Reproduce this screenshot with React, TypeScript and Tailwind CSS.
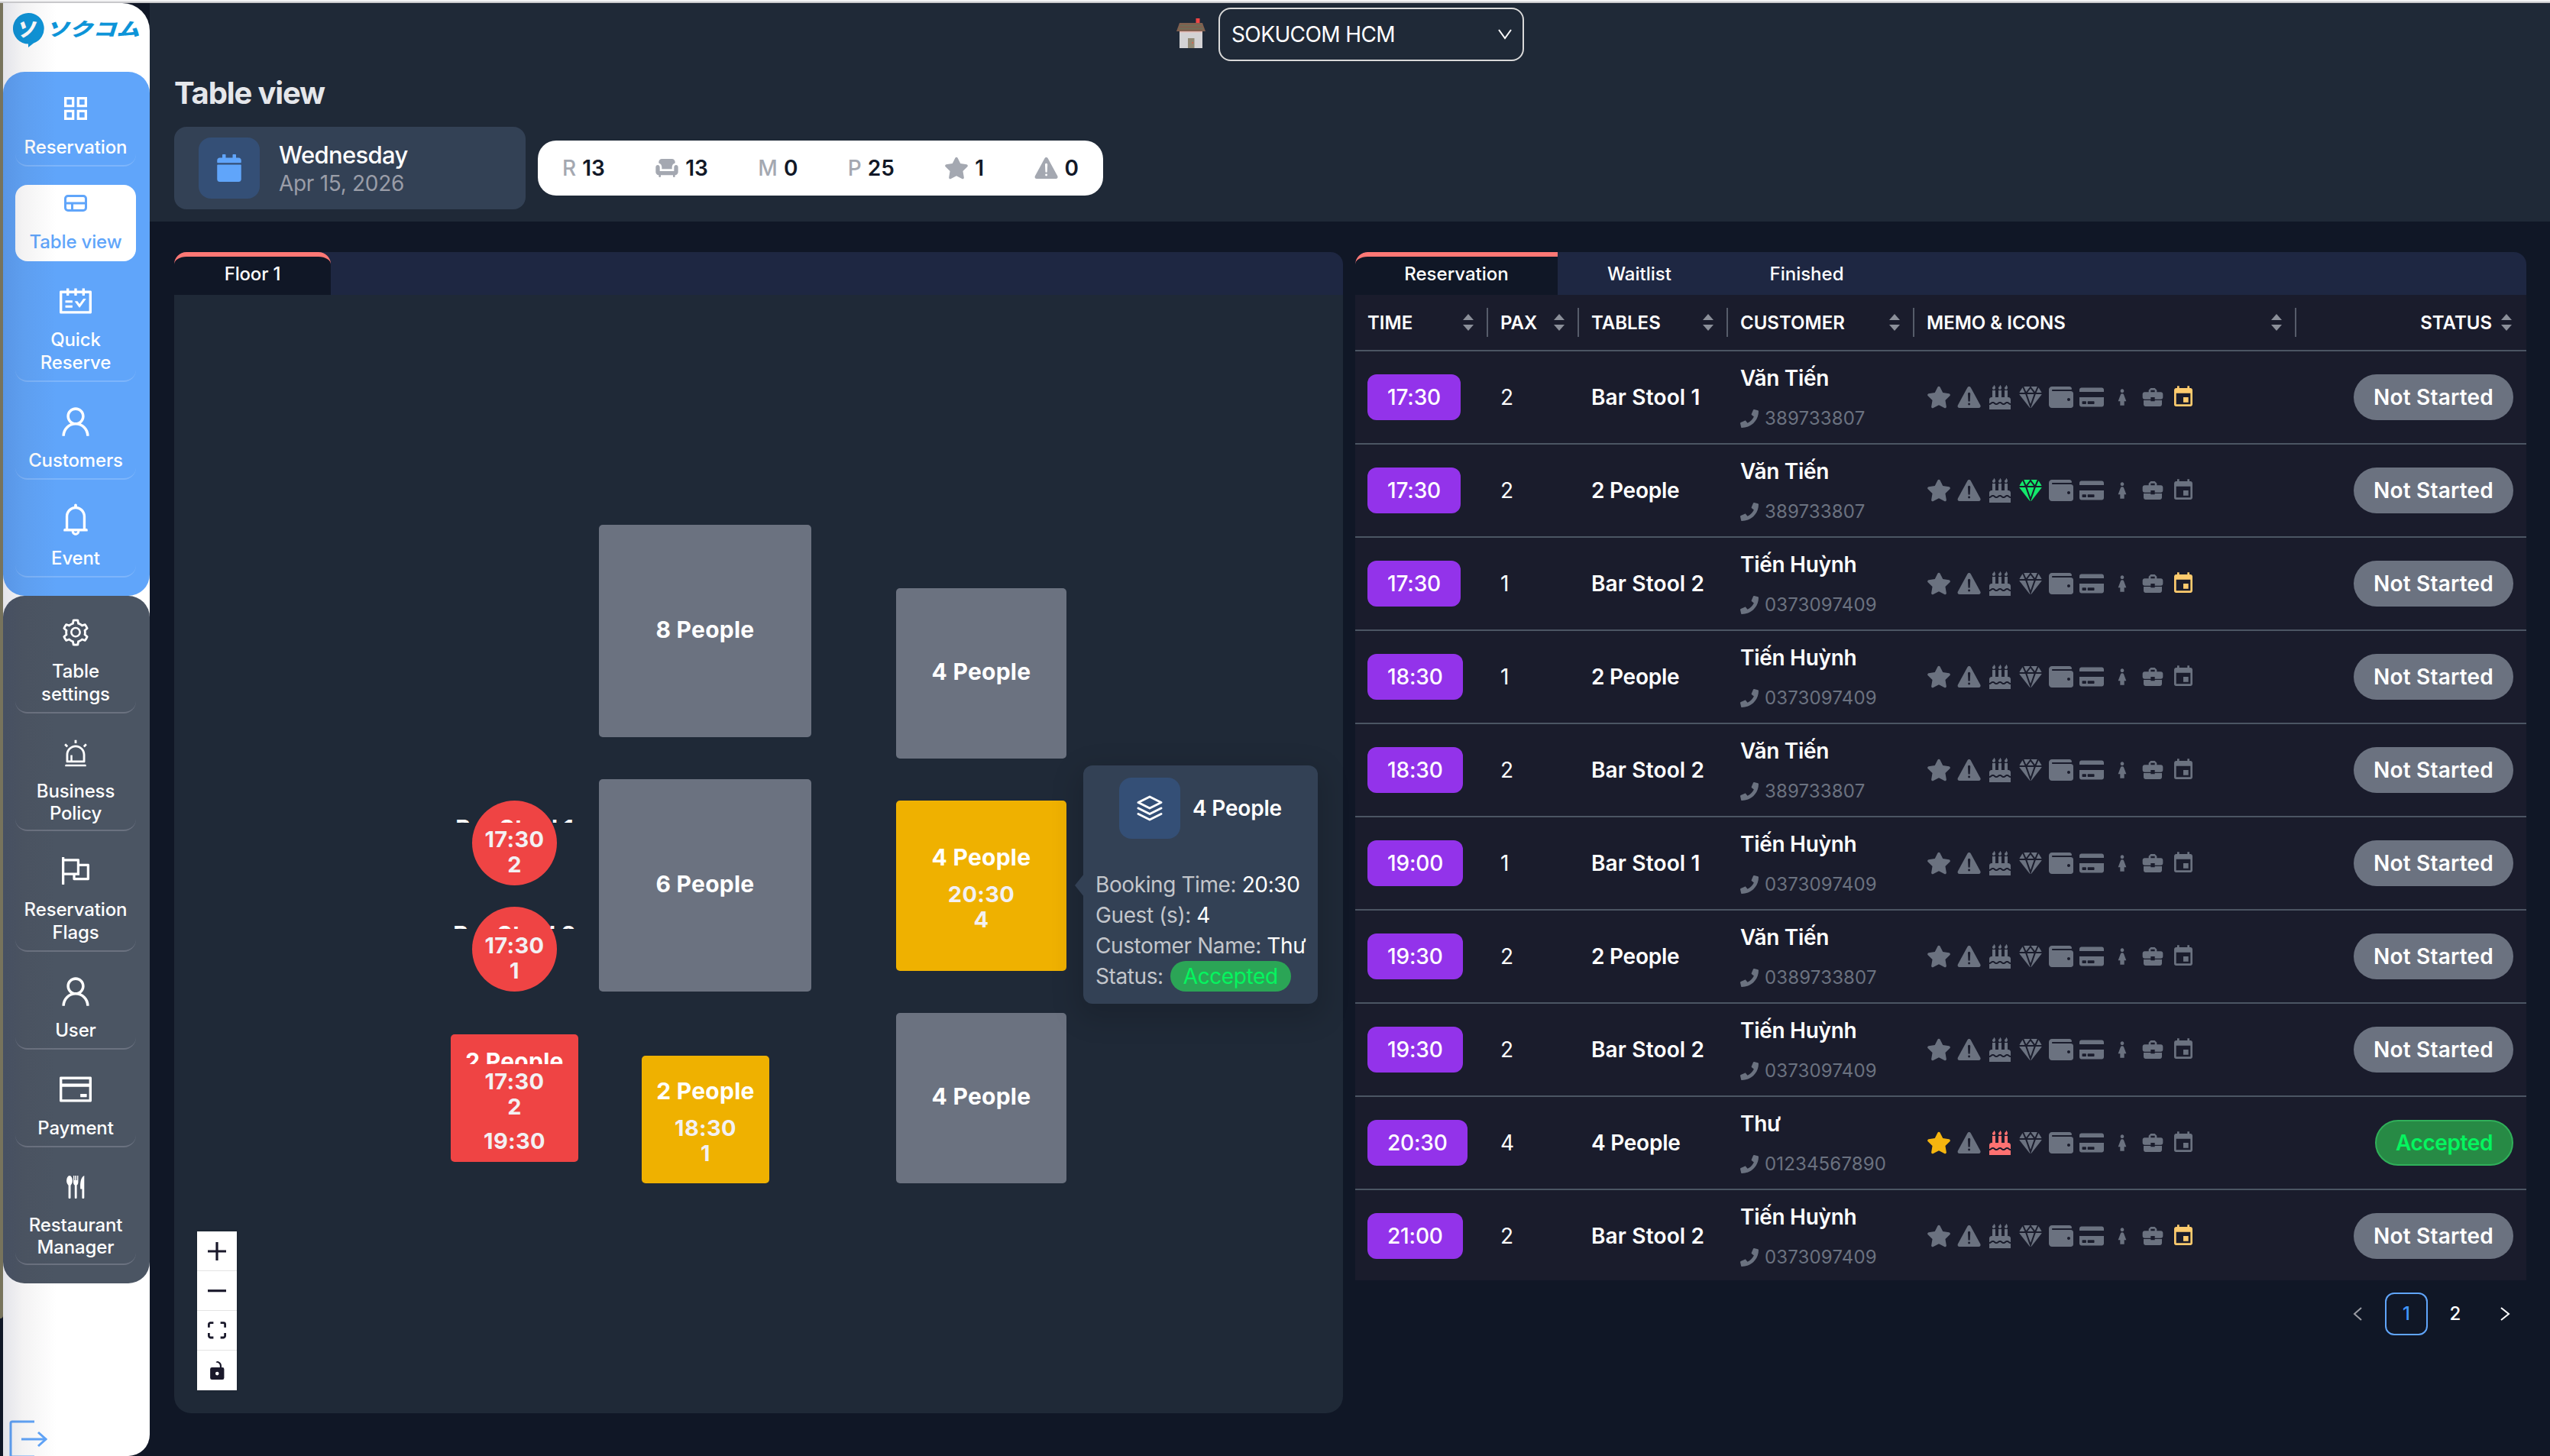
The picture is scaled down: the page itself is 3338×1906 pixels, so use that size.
import type { ReactNode } from 'react';
import type { IconType } from 'react-icons';
import {
  AiOutlineAlert,
  AiOutlineBell,
  AiOutlineCreditCard,
  AiOutlineFlag,
  AiOutlineSchedule,
  AiOutlineSetting,
  AiOutlineUser,
} from 'react-icons/ai';
import { FaBirthdayCake, FaCalendar, FaCreditCard, FaPhone, FaStar, FaWallet } from 'react-icons/fa';
import { FiLayers } from 'react-icons/fi';
import { IoDiamond, IoWarning } from 'react-icons/io5';
import { MdBusinessCenter, MdChair, MdEvent, MdGirl, MdOutlineGridView } from 'react-icons/md';

/* ---------- custom icons ---------- */

function TableViewIcon() {
  return (
    <svg width="30" height="22" viewBox="0 0 30 22" fill="none" stroke="currentColor" strokeWidth="3">
      <rect x="1.5" y="1.5" width="27" height="19" rx="3.5" />
      <path d="M1.5 11h27M10.5 11v9.500" />
    </svg>
  );
}

function CutleryIcon() {
  return (
    <svg width="24" height="30" viewBox="0 0 24 30" fill="currentColor">
      <ellipse cx="4" cy="6.500" rx="3.900" ry="6.500" />
      <rect x="2.600" y="11" width="2.900" height="19" rx="1" />
      <path d="M9 0h1.400v6h1V0h1.600v6h1V0h1.400v8.500c0 2.200-1 3.500-1.800 4V29c0 1.300-2.800 1.300-2.800 0V12.500C9.900 12 9 10.700 9 8.500z" />
      <path d="M23.300 0v29c0 1.300-2.900 1.300-2.900 0V17.500h-2.200C17.600 9 19 1.500 23.300 0z" />
    </svg>
  );
}

function LogoutIcon() {
  return (
    <svg width="50" height="50" viewBox="0 0 50 50" fill="none" stroke="#60a5fa" strokeWidth="3">
      <path d="M33 2H4Q2 2 2 4V46Q2 48 4 48H33" />
      <path d="M16 25H48" />
      <path d="M38 16L48 25L38 34" />
    </svg>
  );
}

function HouseIcon() {
  return (
    <svg width="38" height="42" viewBox="0 0 38 42">
      <rect x="25.500" y="1" width="5" height="9" fill="#ef4444" />
      <path d="M4 7h30l4 11H0z" fill="#80604f" />
      <path d="M5 10.500h28M3 14.500h32" stroke="#6b7059" strokeWidth="1.500" />
      <rect x="4" y="18" width="30" height="22" fill="#d3d2d4" />
      <rect x="4" y="18" width="30" height="1.500" fill="#e3b9b4" />
      <rect x="15" y="27" width="8.500" height="13" fill="#928a75" />
      <rect x="20.500" y="32" width="1.500" height="2" fill="#e05a4a" />
    </svg>
  );
}

function Chevron({ dir, className }: { dir: 'down' | 'left' | 'right'; className?: string }) {
  const d = { down: 'M1 1l8 11 8-11', left: 'M11 1L2 9l9 8', right: 'M1 1l10 8-10 8' }[dir];
  const down = dir === 'down';
  return (
    <svg
      width={down ? 18 : 13}
      height={down ? 14 : 18}
      viewBox={down ? '0 0 18 14' : '0 0 13 18'}
      fill="none"
      stroke="currentColor"
      strokeWidth="2"
      className={className}
    >
      <path d={d} />
    </svg>
  );
}

function Sorter() {
  return (
    <svg width="14" height="22" viewBox="0 0 14 22" fill="#8b8f99">
      <path d="M7 0L14 8H0z" />
      <path d="M7 22L14 14H0z" />
    </svg>
  );
}

/* IoWarning has wide inner margins, so it is drawn larger within a 32px slot */
const Warning: IconType = ({ className }) => <IoWarning size={38} className={`-m-[3px] ${className ?? ''}`} />;

/* ---------- sidebar ---------- */

type NavItem = { lines: string[]; icon: ReactNode; box: string; active?: boolean };

const mainNav: NavItem[] = [
  { lines: ['Reservation'], icon: <MdOutlineGridView size={40} />, box: 'mt-6 h-[100px] leading-[30px]' },
  { lines: ['Table view'], icon: <TableViewIcon />, box: 'mt-6 h-[100px] leading-[30px]', active: true },
  { lines: ['Quick', 'Reserve'], icon: <AiOutlineSchedule size={48} />, box: 'mt-7 h-[130px] leading-[30px]' },
  { lines: ['Customers'], icon: <AiOutlineUser size={48} />, box: 'mt-7 h-[100px] leading-[30px]' },
  { lines: ['Event'], icon: <AiOutlineBell size={48} />, box: 'mt-7 h-[100px] leading-[30px]' },
];

const adminNav: NavItem[] = [
  { lines: ['Table', 'settings'], icon: <AiOutlineSetting size={40} />, box: 'mt-6 h-[130px] leading-[30px]' },
  { lines: ['Business', 'Policy'], icon: <AiOutlineAlert size={40} />, box: 'mt-7 h-[126px] leading-[28.500px]' },
  { lines: ['Reservation', 'Flags'], icon: <AiOutlineFlag size={46} />, box: 'mt-7 h-[130px] leading-[30px]' },
  { lines: ['User'], icon: <AiOutlineUser size={48} />, box: 'mt-7 h-[100px] leading-[30px]' },
  { lines: ['Payment'], icon: <AiOutlineCreditCard size={48} />, box: 'mt-7 h-[100px] leading-[30px]' },
  { lines: ['Restaurant', 'Manager'], icon: <CutleryIcon />, box: 'mt-7 h-[126px] leading-[28.500px]' },
];

function NavList({ items, line }: { items: NavItem[]; line: string }) {
  return (
    <>
      {items.map((it) => (
        <a
          key={it.lines.join(' ')}
          className={`flex w-[158px] shrink-0 flex-col items-center rounded-2xl text-center text-[24px] font-medium tracking-[-0.150px] ${it.box} ${
            it.active ? 'bg-white text-[#60a5fa]' : `border-b-2 text-white ${line}`
          }`}
        >
          <span className="flex h-12 shrink-0 items-center justify-center">{it.icon}</span>
          <span className="mt-[12px] flex flex-col whitespace-nowrap">
            {it.lines.map((l) => (
              <span key={l}>{l}</span>
            ))}
          </span>
        </a>
      ))}
    </>
  );
}

function Sidebar() {
  return (
    <aside className="flex h-full w-[196px] shrink-0">
      <div className="h-full w-1 shrink-0 bg-[#101726]">
        <div className="h-[1722px] rounded-br bg-[#77735c]" />
      </div>
      <div className="relative flex h-full w-[192px] flex-col overflow-hidden rounded-tr-[36px] rounded-br-[28px] bg-white">
        <div className="flex h-[90px] shrink-0 items-start pt-[13px] pl-[13px]">
          <div className="relative h-[46px] w-[41px] shrink-0">
            <svg width="41" height="46" viewBox="0 0 41 46">
              <path d="M20.500 0A20.300 20.300 0 0 1 27 39.500L20 45V40.600A20.300 20.300 0 0 1 20.500 0z" fill="#0d94d8" />
            </svg>
            <span className="absolute top-[3px] left-[6px] -skew-x-12 font-['Noto_Sans_CJK_JP'] text-[26px] leading-[34px] font-black text-white">
              ソ
            </span>
          </div>
          <span className="mt-[5px] ml-[5px] origin-left -skew-x-[14deg] scale-x-[1.080] scale-y-[0.850] font-['Noto_Sans_CJK_JP'] text-[28.500px] leading-[30px] font-black whitespace-nowrap text-[#0d94d8]">
            ソクコム
          </span>
        </div>
        <nav className="flex h-[686px] shrink-0 flex-col items-center rounded-[28px] bg-[#60a5fa] pr-[2px]">
          <NavList items={mainNav} line="border-[#7db5fb]" />
        </nav>
        <nav className="flex h-[900px] shrink-0 flex-col items-center rounded-[28px] bg-[#4b5563] pr-[2px]">
          <NavList items={adminNav} line="border-[#6b7280]" />
        </nav>
        <div className="mt-[179px] ml-[8px] shrink-0">
          <LogoutIcon />
        </div>
        <div className="pointer-events-none absolute inset-0 bg-[linear-gradient(90deg,rgba(40,45,90,0.130)_0px,rgba(60,50,60,0.060)_26px,transparent_70px)]" />
      </div>
    </aside>
  );
}

/* ---------- header ---------- */

function Stat({ mark, value }: { mark: ReactNode; value: string }) {
  return (
    <div className="flex items-center gap-2 text-[28px]">
      <span className="flex font-medium text-[#a4a8b1]">{mark}</span>
      <span className="font-semibold text-[#111827]">{value}</span>
    </div>
  );
}

function Header() {
  return (
    <header className="flex h-[286px] flex-col bg-[#1f2937] px-8 text-white">
      <div className="flex h-[82px] items-start gap-[17px] pt-1.5 pl-[1312px]">
        <div className="mt-[13px]">
          <HouseIcon />
        </div>
        <div className="flex h-[70px] w-[400px] items-center justify-between rounded-2xl border-2 border-[#d9d9d9] pr-[14px] pl-[15px] text-[28px] text-white">
          <span className="tracking-[-0.600px]">SOKUCOM HCM</span>
          <Chevron dir="down" />
        </div>
      </div>
      <h1 className="mt-[11px] h-[50px] text-[40px] leading-[50px] font-bold tracking-[-1.150px] text-[#e5e7eb]">Table view</h1>
      <div className="mt-[19px] flex items-center gap-4">
        <div className="flex h-[108px] w-[460px] items-center gap-[25px] rounded-2xl bg-[#334155] pl-8">
          <div className="flex size-20 items-center justify-center rounded-2xl bg-[#344f76]">
            <FaCalendar size={36} className="text-[#60a5fa]" />
          </div>
          <div className="flex flex-col pt-[3px]">
            <span className="text-[31px] leading-[36px] font-medium tracking-[-0.650px]">Wednesday</span>
            <span className="text-[28px] leading-[38px] tracking-[-0.300px] text-[#9a9da8]">Apr 15, 2026</span>
          </div>
        </div>
        <div className="flex h-[72px] w-[740px] items-center justify-between rounded-[24px] bg-white px-8">
          <Stat mark="R" value="13" />
          <Stat mark={<MdChair size={32} />} value="13" />
          <Stat mark="M" value="0" />
          <Stat mark="P" value="25" />
          <Stat mark={<FaStar size={32} />} value="1" />
          <Stat mark={<Warning />} value="0" />
        </div>
      </div>
    </header>
  );
}

/* ---------- floor plan ---------- */

type TableNode = {
  place: string;
  tone: string;
  label: string;
  labelBox: string;
  lines?: { text: string; gap?: string }[];
};

const GREY = 'rounded-[5px] bg-[#6b7280]';
const AMBER = 'rounded-[5px] bg-[#efb100]';
const RED = 'rounded-[5px] bg-[#ef4444]';
const STOOL = 'rounded-full bg-[#ef4444]';

const tableNodes: TableNode[] = [
  { place: 'left-[556px] top-[301px] size-[278px]', tone: GREY, label: '8 People', labelBox: 'mt-[119px] h-9' },
  { place: 'left-[945px] top-[384px] size-[223px]', tone: GREY, label: '4 People', labelBox: 'mt-[91px] h-9' },
  { place: 'left-[556px] top-[634px] size-[278px]', tone: GREY, label: '6 People', labelBox: 'mt-[119px] h-9' },
  {
    place: 'left-[945px] top-[662px] size-[223px]',
    tone: AMBER,
    label: '4 People',
    labelBox: 'mt-[56px] h-9',
    lines: [{ text: '20:30', gap: 'mt-[14px]' }, { text: '4' }],
  },
  { place: 'left-[945px] top-[940px] size-[223px]', tone: GREY, label: '4 People', labelBox: 'mt-[91px] h-9' },
  {
    place: 'left-[390px] top-[662px] size-[111px]',
    tone: STOOL,
    label: 'Bar Stool 1',
    labelBox: 'mt-[18px] h-[11px]',
    lines: [{ text: '17:30', gap: 'mt-[5px]' }, { text: '2' }],
  },
  {
    place: 'left-[390px] top-[801px] size-[111px]',
    tone: STOOL,
    label: 'Bar Stool 2',
    labelBox: 'mt-[18px] h-[11px]',
    lines: [{ text: '17:30', gap: 'mt-[5px]' }, { text: '1' }],
  },
  {
    place: 'left-[362px] top-[968px] size-[167px]',
    tone: RED,
    label: '2 People',
    labelBox: 'mt-[17px] h-[22px]',
    lines: [{ text: '17:30', gap: 'mt-[6px]' }, { text: '2' }, { text: '19:30', gap: 'mt-[12px]' }],
  },
  {
    place: 'left-[612px] top-[996px] size-[167px]',
    tone: AMBER,
    label: '2 People',
    labelBox: 'mt-[28px] h-9',
    lines: [{ text: '18:30', gap: 'mt-[14px]' }, { text: '1' }],
  },
];

function FloorTable({ node }: { node: TableNode }) {
  return (
    <div className={`absolute flex flex-col items-center font-bold ${node.place} ${node.tone}`}>
      <div className={`shrink-0 overflow-hidden text-[30px] leading-9 tracking-[0.250px] whitespace-nowrap text-white ${node.labelBox}`}>
        {node.label}
      </div>
      {node.lines?.map((l, i) => (
        <div key={i} className={`shrink-0 text-[29px] leading-[33px] tracking-[0.300px] text-[#f3f0f3] ${l.gap ?? ''}`}>
          {l.text}
        </div>
      ))}
    </div>
  );
}

function Tooltip() {
  return (
    <div className="absolute top-[616px] left-[1190px] flex h-[312px] w-[307px] flex-col rounded-xl bg-[#334155] px-[16px] pt-4 text-[28px] text-white shadow-[0_12px_36px_8px_rgba(0,0,0,0.140)]">
      <div className="absolute top-[142px] -left-[11px] h-[30px] w-[12px] bg-[#334155] [clip-path:polygon(100%_0,0_50%,100%_100%)]" />
      <div className="flex items-center justify-center gap-[16px]">
        <span className="flex size-20 items-center justify-center rounded-2xl bg-[#344f76]">
          <FiLayers size={36} />
        </span>
        <span className="font-semibold tracking-[-0.200px]">4 People</span>
      </div>
      <div className="mt-[40px] flex flex-col leading-10 tracking-[-0.400px] whitespace-nowrap text-[#c3c6cb]">
        <p>
          Booking Time: <span className="text-white">20:30</span>
        </p>
        <p>
          Guest (s): <span className="text-white">4</span>
        </p>
        <p>
          Customer Name: <span className="text-white">Thư</span>
        </p>
        <p className="flex items-center gap-[9px]">
          Status:
          <span className="flex h-10 items-center rounded-full bg-[#2ba556] px-[17px] text-[#05f55f]">Accepted</span>
        </p>
      </div>
    </div>
  );
}

function MapControls() {
  const cell = 'flex h-[52px] items-center justify-center border-b border-[#e3e3e3] last:border-b-0';
  return (
    <div className="absolute top-[1226px] left-[30px] flex w-[52px] flex-col bg-white text-[#1a192b] shadow-[0_0_2px_1px_rgba(0,0,0,0.080)]">
      <div className={cell}>
        <svg viewBox="0 0 32 32" width="24" height="24" fill="currentColor">
          <path d="M32 18.133H18.133V32h-4.266V18.133H0v-4.266h13.867V0h4.266v13.867H32z" />
        </svg>
      </div>
      <div className={cell}>
        <svg viewBox="0 0 32 5" width="24" height="4" fill="currentColor">
          <path d="M0 0h32v4.200H0z" />
        </svg>
      </div>
      <div className={cell}>
        <svg viewBox="0 0 32 30" width="24" height="23" fill="currentColor">
          <path d="M3.692 4.630c0-.53.4-.938.939-.938h5.215V0H4.708C2.130 0 0 2.054 0 4.630v5.216h3.692V4.631zM27.354 0h-5.200v3.692h5.170c.53 0 .984.4.984.939v5.215H32V4.631A4.624 4.624 0 0027.354 0zm.954 24.830c0 .532-.4.940-.939.940h-5.215v3.768h5.215c2.577 0 4.631-2.130 4.631-4.707v-5.139h-3.692v5.139zm-23.677.940c-.531 0-.939-.4-.939-.940v-5.138H0v5.139c0 2.577 2.130 4.707 4.708 4.707h5.138V25.770H4.631z" />
        </svg>
      </div>
      <div className={cell}>
        <svg viewBox="0 0 25 32" width="19" height="24" fill="currentColor">
          <path d="M21.333 10.667H19.810V7.619C19.810 3.429 16.380 0 12.190 0c-4.114 1.828-1.370 2.133.305 2.438 1.676.305 4.420 2.590 4.420 5.181v3.048H3.047A3.056 3.056 0 000 13.714v15.238A3.056 3.056 0 003.048 32h18.285a3.056 3.056 0 003.048-3.048V13.714a3.056 3.056 0 00-3.048-3.047zM12.190 24.533a3.056 3.056 0 01-3.047-3.047 3.056 3.056 0 013.047-3.048 3.056 3.056 0 013.048 3.048 3.056 3.056 0 01-3.048 3.047z" />
        </svg>
      </div>
    </div>
  );
}

function FloorPanel() {
  return (
    <section className="flex h-[1520px] w-[1530px] flex-col">
      <div className="flex h-14 rounded-t-2xl bg-[#1e2742] text-[24px] font-medium text-white">
        <div className="flex w-[205px] items-center justify-center rounded-t-2xl border-t-[6px] border-[#ff7875] bg-[#101726] pb-1">
          <span className="tracking-[-0.200px]">Floor 1</span>
        </div>
      </div>
      <div className="relative flex-1 rounded-b-[22px] bg-[#1f2937]">
        {tableNodes.map((n, i) => (
          <FloorTable key={i} node={n} />
        ))}
        <Tooltip />
        <MapControls />
      </div>
    </section>
  );
}

/* ---------- reservation list ---------- */

const GRID = 'grid grid-cols-[174px_119px_195px_244px_500px_301px]';

type Row = {
  time: string;
  pax: number;
  table: string;
  name: string;
  phone: string;
  on?: Record<number, string>;
  accepted?: boolean;
};

const EVENT_ON = { 8: 'text-[#fdcb6e]' };

const rows: Row[] = [
  { time: '17:30', pax: 2, table: 'Bar Stool 1', name: 'Văn Tiến', phone: '389733807', on: EVENT_ON },
  { time: '17:30', pax: 2, table: '2 People', name: 'Văn Tiến', phone: '389733807', on: { 3: 'text-[#13e86b]' } },
  { time: '17:30', pax: 1, table: 'Bar Stool 2', name: 'Tiến Huỳnh', phone: '0373097409', on: EVENT_ON },
  { time: '18:30', pax: 1, table: '2 People', name: 'Tiến Huỳnh', phone: '0373097409' },
  { time: '18:30', pax: 2, table: 'Bar Stool 2', name: 'Văn Tiến', phone: '389733807' },
  { time: '19:00', pax: 1, table: 'Bar Stool 1', name: 'Tiến Huỳnh', phone: '0373097409' },
  { time: '19:30', pax: 2, table: '2 People', name: 'Văn Tiến', phone: '0389733807' },
  { time: '19:30', pax: 2, table: 'Bar Stool 2', name: 'Tiến Huỳnh', phone: '0373097409' },
  {
    time: '20:30',
    pax: 4,
    table: '4 People',
    name: 'Thư',
    phone: '01234567890',
    on: { 0: 'text-[#f5b50f]', 2: 'text-[#ff7171]' },
    accepted: true,
  },
  { time: '21:00', pax: 2, table: 'Bar Stool 2', name: 'Tiến Huỳnh', phone: '0373097409', on: EVENT_ON },
];

const memoIcons: IconType[] = [
  FaStar,
  Warning,
  FaBirthdayCake,
  IoDiamond,
  FaWallet,
  FaCreditCard,
  MdGirl,
  MdBusinessCenter,
  MdEvent,
];

function HeadCell({ children, right, last }: { children: ReactNode; right?: boolean; last?: boolean }) {
  return (
    <div className="flex h-[72px] items-center">
      <div className={`flex flex-1 items-center pl-4 ${right ? 'justify-end gap-3' : 'justify-between'} ${last ? 'pr-[19px]' : 'pr-[17px]'}`}>
        <span className="pt-px whitespace-nowrap">{children}</span>
        <Sorter />
      </div>
      {!last && <span className="h-[38px] w-0.5 bg-[#565c6a]" />}
    </div>
  );
}

function ReservationRow({ row }: { row: Row }) {
  const tableTracking = row.table.startsWith('Bar') ? 'tracking-[0.150px]' : 'tracking-[-0.250px]';
  return (
    <div className={`${GRID} h-[122px] items-center border-b-2 border-[#4b5563] text-[28px] text-white`}>
      <div className="pl-4">
        <span className="inline-flex h-[60px] items-center rounded-xl bg-[#9333ea] px-[26px] font-medium tracking-[-0.150px]">
          {row.time}
        </span>
      </div>
      <div className="pl-4">{row.pax}</div>
      <div className={`pl-4 font-semibold whitespace-nowrap ${tableTracking}`}>{row.table}</div>
      <div className="flex h-full flex-col pl-4 whitespace-nowrap">
        <span className="mt-[17px] leading-9 font-semibold tracking-[-0.300px]">{row.name}</span>
        <span className="mt-[19px] flex items-center gap-2 text-[24px] leading-[32px] tracking-[0.150px] text-[#6b7280]">
          <FaPhone size={24} />
          {row.phone}
        </span>
      </div>
      <div className="flex gap-2 pl-4">
        {memoIcons.map((Icon, i) => (
          <span key={i} className="flex size-8 shrink-0">
            <Icon size={32} className={`shrink-0 ${row.on?.[i] ?? 'text-[#6b7280]'}`} />
          </span>
        ))}
      </div>
      <div className="flex justify-end pr-[17px] font-semibold">
        {row.accepted ? (
          <span className="flex h-[60px] items-center rounded-full border-2 border-[#30b05a] bg-[#278a45] px-[25px] tracking-[-0.400px] text-[#05f55f]">
            Accepted
          </span>
        ) : (
          <span className="flex h-[60px] items-center rounded-full bg-[#6b7280] px-[26px] tracking-[0.200px]">Not Started</span>
        )}
      </div>
    </div>
  );
}

function ReservationPanel() {
  return (
    <section className="flex w-[1533px] flex-col text-white">
      <div className="flex h-14 overflow-hidden rounded-t-2xl bg-[#1e2742] text-[24px] font-medium">
        <div className="flex w-[265px] items-center justify-center rounded-tl-2xl border-t-[6px] border-[#ff7875] bg-[#101726] pb-1">
          Reservation
        </div>
        <div className="flex w-[214px] items-center justify-center pt-0.5">Waitlist</div>
        <div className="flex w-[224px] items-center justify-center pt-0.5">Finished</div>
      </div>
      <div className="h-[1290px] overflow-hidden bg-[#1a1c2c]">
        <div className={`${GRID} h-[74px] border-b-2 border-[#4b5563] text-[24px] font-semibold`}>
          <HeadCell>TIME</HeadCell>
          <HeadCell>PAX</HeadCell>
          <HeadCell>TABLES</HeadCell>
          <HeadCell>CUSTOMER</HeadCell>
          <HeadCell>MEMO &amp; ICONS</HeadCell>
          <HeadCell right last>
            STATUS
          </HeadCell>
        </div>
        {rows.map((r, i) => (
          <ReservationRow key={i} row={r} />
        ))}
      </div>
      <div className="mt-4 flex h-14 items-center justify-end pr-[21px] text-[24px] font-medium">
        <Chevron dir="left" className="text-[#9a9ca3]" />
        <span className="ml-[29px] flex size-14 items-center justify-center rounded-xl border-2 border-[#60a5fa] text-[#4096ff]">1</span>
        <span className="ml-2 flex size-14 items-center justify-center">2</span>
        <Chevron dir="right" className="ml-[31px]" />
      </div>
    </section>
  );
}

export default function App() {
  return (
    <div className="flex h-[1906px] w-[3338px] flex-col overflow-hidden bg-[#101726] font-['Inter','Noto_Sans_CJK_JP',sans-serif]">
      <div className="h-1 shrink-0 border-b-2 border-[#c8c8cb] bg-[#f4f4f5]" />
      <div className="flex h-[1902px]">
        <Sidebar />
        <div className="flex flex-1 flex-col">
          <Header />
          <main className="flex items-start gap-4 px-8 pt-10">
            <FloorPanel />
            <ReservationPanel />
          </main>
        </div>
      </div>
    </div>
  );
}
